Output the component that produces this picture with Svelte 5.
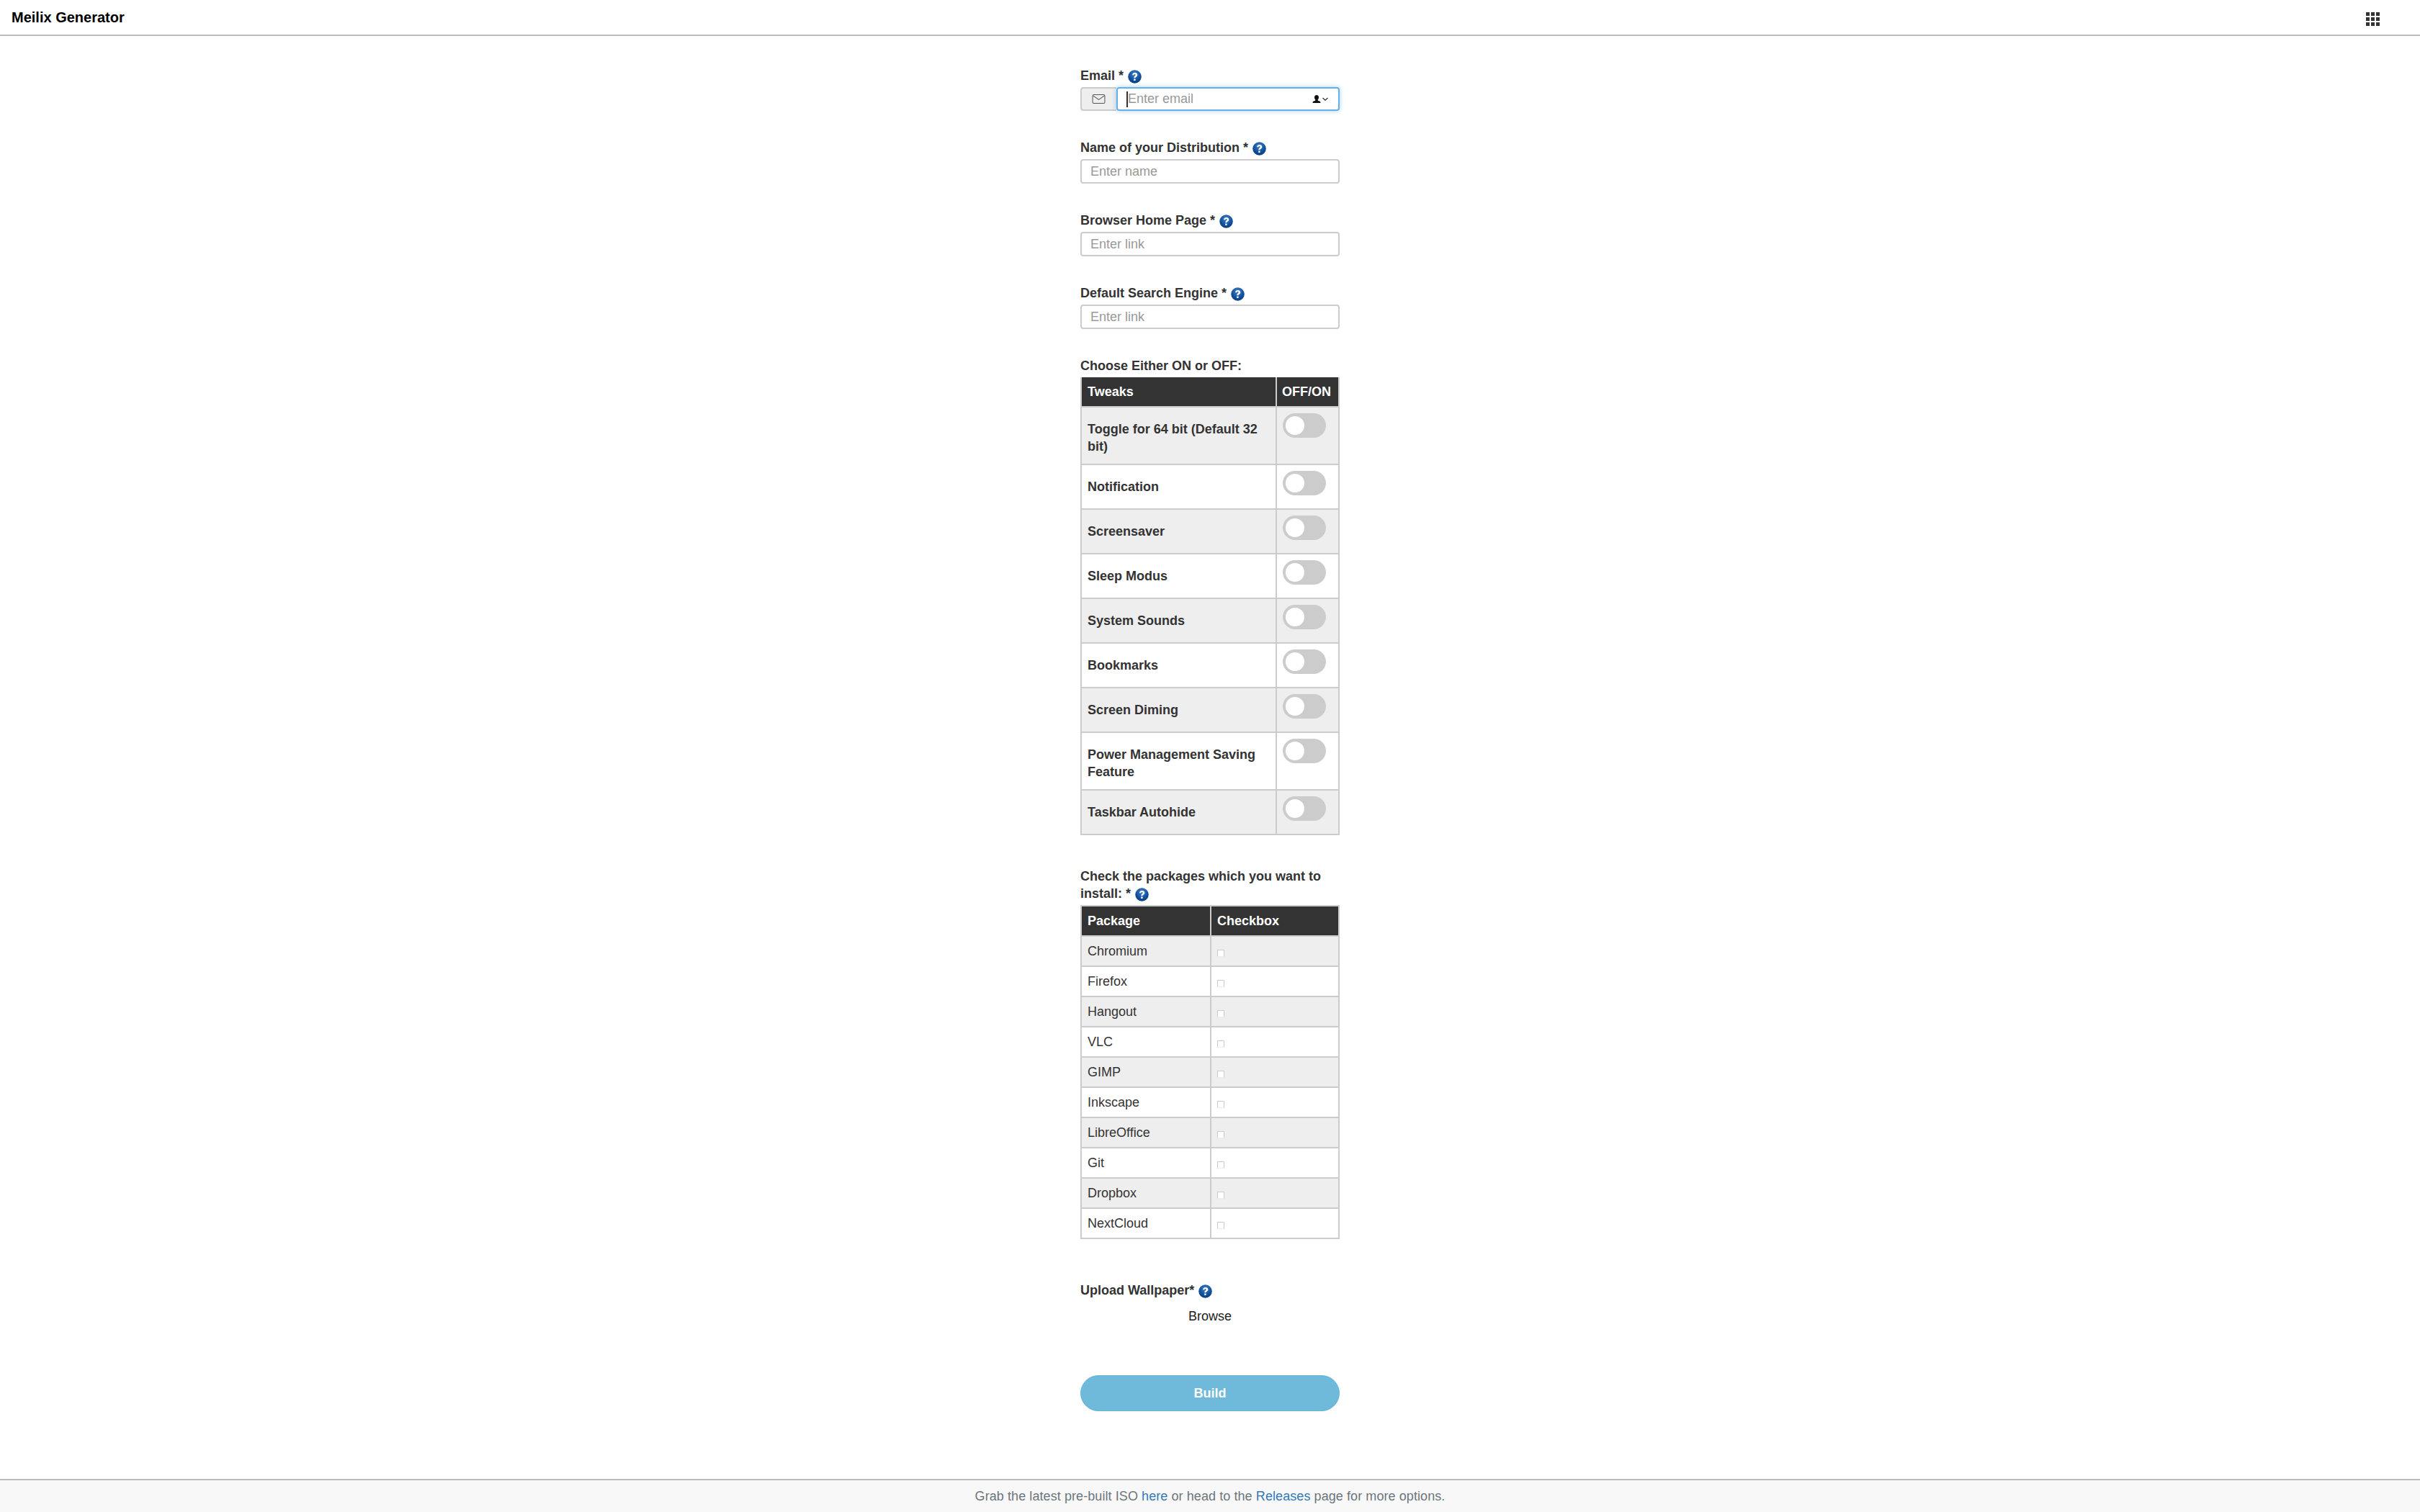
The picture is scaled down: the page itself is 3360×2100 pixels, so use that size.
<script>
  const fields = [
    { label: 'Name of your Distribution *', placeholder: 'Enter name' },
    { label: 'Browser Home Page *', placeholder: 'Enter link' },
    { label: 'Default Search Engine *', placeholder: 'Enter link' }
  ];
  const tweaks = [
    { name: 'Toggle for 64 bit (Default 32 bit)', long: true },
    { name: 'Notification' },
    { name: 'Screensaver' },
    { name: 'Sleep Modus' },
    { name: 'System Sounds' },
    { name: 'Bookmarks' },
    { name: 'Screen Diming' },
    { name: 'Power Management Saving Feature', long: true },
    { name: 'Taskbar Autohide' }
  ];
  const packages = ['Chromium', 'Firefox', 'Hangout', 'VLC', 'GIMP', 'Inkscape', 'LibreOffice', 'Git', 'Dropbox', 'NextCloud'];
</script>

{#snippet help()}
  <svg class="help" viewBox="0 0 18 18" width="19" height="19" aria-hidden="true">
    <defs>
      <radialGradient id="hg" cx="50%" cy="30%" r="75%">
        <stop offset="0" stop-color="#3f82c9" />
        <stop offset="0.6" stop-color="#12509c" />
        <stop offset="1" stop-color="#0b3a78" />
      </radialGradient>
    </defs>
    <circle cx="9" cy="9" r="8.8" fill="url(#hg)" />
    <path d="M5.700 6.900C5.800 4.800 7.300 3.700 9.200 3.700c2 0 3.400 1.200 3.400 2.900 0 1.300-.7 2-1.600 2.600-.8.500-1 .8-1 1.500H7.900c-.1-1.300.3-2.100 1.200-2.700.7-.4 1-.8 1-1.300 0-.6-.4-1-1-1-.7 0-1.100.5-1.200 1.200z M7.800 11.900h2.200v2.300H7.800z" fill="#fff" />
  </svg>
{/snippet}

<div class="page">
  <header class="topbar">
    <span class="brand">Meilix Generator</span>
    <span class="apps" aria-hidden="true">
      {#each Array(9) as _}<i></i>{/each}
    </span>
  </header>

  <main class="content">
    <form class="form">
      <div class="field">
        <div class="label">Email * {@render help()}</div>
        <div class="group">
          <span class="addon">
            <svg viewBox="0 0 20 16" width="19" height="15" fill="none" stroke="#555" stroke-width="1.1">
              <rect x="1" y="1.500" width="18" height="13" rx="2" />
              <path d="M1.500 3l8.500 6 8.500-6" />
            </svg>
          </span>
          <div class="focus-input">
            <i class="caret"></i>
            <span class="ph">Enter email</span>
            <svg class="contact" viewBox="0 0 24 12" width="24" height="12">
              <path d="M7 0c2 0 3 1.300 3 3.200 0 1.500-.7 2.800-1.400 3.500 0 .9.500 1.200 1.600 1.600 1.200.4 2.300.8 2.300 2.700H1.500c0-1.900 1.100-2.300 2.300-2.700 1.100-.4 1.600-.7 1.600-1.600C4.700 6 4 4.700 4 3.200 4 1.300 5 0 7 0z" fill="#111" />
              <path d="M15.500 4l3.500 3.200L22.500 4" fill="none" stroke="#222" stroke-width="1.100" />
            </svg>
          </div>
        </div>
      </div>

      {#each fields as f}
        <div class="field">
          <div class="label">{f.label} {@render help()}</div>
          <input class="input" type="text" placeholder={f.placeholder} />
        </div>
      {/each}

      <section class="tweaks">
        <div class="label">Choose Either ON or OFF:</div>
        <table class="tbl tbl-tweaks">
          <thead><tr><th>Tweaks</th><th class="th-toggle">OFF/ON</th></tr></thead>
          <tbody>
            {#each tweaks as t}
              <tr>
                <td class="tweak-name" class:long={t.long}>{t.name}</td>
                <td class="tweak-toggle"><span class="switch"><i></i></span></td>
              </tr>
            {/each}
          </tbody>
        </table>
      </section>

      <section class="packages">
        <div class="label pk-label">Check the packages which you want to install: * {@render help()}</div>
        <table class="tbl tbl-pk">
          <thead><tr><th>Package</th><th>Checkbox</th></tr></thead>
          <tbody>
            {#each packages as p}
              <tr>
                <td>{p}</td>
                <td class="pk-check"><input type="checkbox" /></td>
              </tr>
            {/each}
          </tbody>
        </table>
      </section>

      <section class="upload">
        <div class="label">Upload Wallpaper* {@render help()}</div>
        <div class="browse">Browse</div>
      </section>

      <button class="build" type="button">Build</button>
    </form>
  </main>

  <footer class="foot">
    Grab the latest pre-built ISO <a href="#here">here</a> or head to the <a href="#releases">Releases</a> page for more options.
  </footer>
</div>

<style>
  :global(body) {
    margin: 0;
    font-family: "Liberation Sans", Arial, sans-serif;
    background: #fff;
    color: #333;
  }
  .page {
    min-height: 100vh;
    display: flex;
    flex-direction: column;
    box-sizing: border-box;
  }
  .topbar {
    height: 47px;
    border-bottom: 2px solid #bbb;
    display: flex;
    align-items: center;
    justify-content: space-between;
    padding: 1px 56px 0 16px;
    box-sizing: content-box;
    flex: none;
  }
  .brand {
    font-size: 20px;
    font-weight: 700;
    color: #000;
  }
  .apps {
    display: grid;
    grid-template-columns: repeat(3, 5px);
    grid-auto-rows: 5px;
    gap: 2px;
    margin-top: 3px;
  }
  .apps i {
    background: #333;
    display: block;
  }
  .content {
    flex: 1;
    display: flex;
    justify-content: center;
  }
  .form {
    width: 360px;
    padding-top: 43px;
    display: flex;
    flex-direction: column;
  }
  .field {
    margin-bottom: 39px;
  }
  .label {
    font-size: 18px;
    font-weight: 700;
    line-height: 24px;
    color: #333;
    margin-bottom: 4px;
  }
  .help {
    vertical-align: -5px;
    margin-left: 1px;
  }
  .group {
    display: flex;
    height: 33px;
    margin-top: 1px;
  }
  .addon {
    width: 50px;
    box-sizing: border-box;
    background: #eee;
    border: 2px solid #ccc;
    border-right: 0;
    border-radius: 4px 0 0 4px;
    display: flex;
    align-items: center;
    justify-content: center;
    padding-right: 2px;
  }
  .focus-input {
    flex: 1;
    box-sizing: border-box;
    border: 2px solid #66afe9;
    border-radius: 4px;
    box-shadow: 0 0 6px rgba(102, 175, 233, 0.6);
    display: flex;
    align-items: center;
    padding-left: 12px;
    position: relative;
    background: #fff;
  }
  .caret {
    width: 2px;
    height: 22px;
    background: #333;
    flex: none;
  }
  .ph {
    font-size: 18px;
    color: #999;
    flex: 1;
  }
  .contact {
    margin-right: 13px;
  }
  .input {
    display: block;
    width: 100%;
    height: 34px;
    box-sizing: border-box;
    border: 2px solid #ccc;
    border-radius: 4px;
    padding: 0 12px;
    font: 18px "Liberation Sans", Arial, sans-serif;
    color: #333;
    outline: none;
  }
  .input::placeholder {
    color: #999;
    opacity: 1;
  }
  .tbl {
    width: 360px;
    border-collapse: collapse;
    table-layout: fixed;
    font-size: 18px;
    line-height: 24px;
  }
  .tbl th {
    background: #333;
    color: #fff;
    font-weight: 700;
    text-align: left;
    padding: 8px;
    height: 40px;
    box-sizing: border-box;
    border: 2px solid #ccc;
  }
  .tbl td {
    border: 2px solid #ccc;
    color: #333;
  }
  .tbl tbody tr:nth-child(odd) td {
    background: #eee;
  }
  .tweaks .label {
    margin-bottom: 4px;
  }
  .tbl-tweaks th:first-child {
    width: 271px;
  }
  .tbl-tweaks thead th {
    border-top: 0;
  }
  .tbl .th-toggle {
    white-space: nowrap;
    padding-left: 7px;
  }
  .tbl .tweak-name {
    font-weight: 700;
    padding: 15px 8px;
    vertical-align: middle;
  }
  .tbl .tweak-name.long {
    padding: 18px 8px 12px;
  }
  .tbl .tweak-toggle {
    padding: 8px 8px 18px;
    vertical-align: top;
  }
  .switch {
    display: block;
    width: 60px;
    height: 34px;
    border-radius: 17px;
    background: #ccc;
    position: relative;
  }
  .switch i {
    position: absolute;
    left: 4px;
    top: 4px;
    width: 26px;
    height: 26px;
    border-radius: 50%;
    background: #fff;
  }
  .packages {
    margin-top: 45px;
  }
  .tbl-pk th:first-child {
    width: 180px;
  }
  .tbl-pk td {
    padding: 8px;
    height: 42px;
    box-sizing: border-box;
    font-weight: 400;
  }
  .tbl-pk .pk-check {
    padding: 0 8px;
    vertical-align: middle;
  }
  .pk-check input {
    appearance: none;
    display: block;
    box-sizing: border-box;
    width: 10px;
    height: 10px;
    margin: 6px 0 0;
    border: 1px solid #ccc;
    border-bottom-color: #eee;
    border-radius: 1px;
    background: #fff;
  }
  .upload {
    margin-top: 59px;
  }
  .browse {
    text-align: center;
    font-size: 18px;
    line-height: 24px;
    color: #222;
    margin-top: 12px;
  }
  .build {
    margin-top: 70px;
    height: 50px;
    width: 360px;
    border-radius: 25px;
    border: 1px solid #65b5d8;
    background: #6fbada;
    color: #fff;
    font: 700 18px "Liberation Sans", Arial, sans-serif;
    flex: none;
  }
  .foot {
    height: 44px;
    flex: none;
    border-top: 2px solid #bbb;
    background: #f8f8f8;
    color: #6c757d;
    font-size: 18px;
    letter-spacing: 0.08px;
    display: flex;
    align-items: center;
    justify-content: center;
    white-space: pre;
  }
  .foot a {
    color: #337ab7;
    text-decoration: none;
  }
</style>
